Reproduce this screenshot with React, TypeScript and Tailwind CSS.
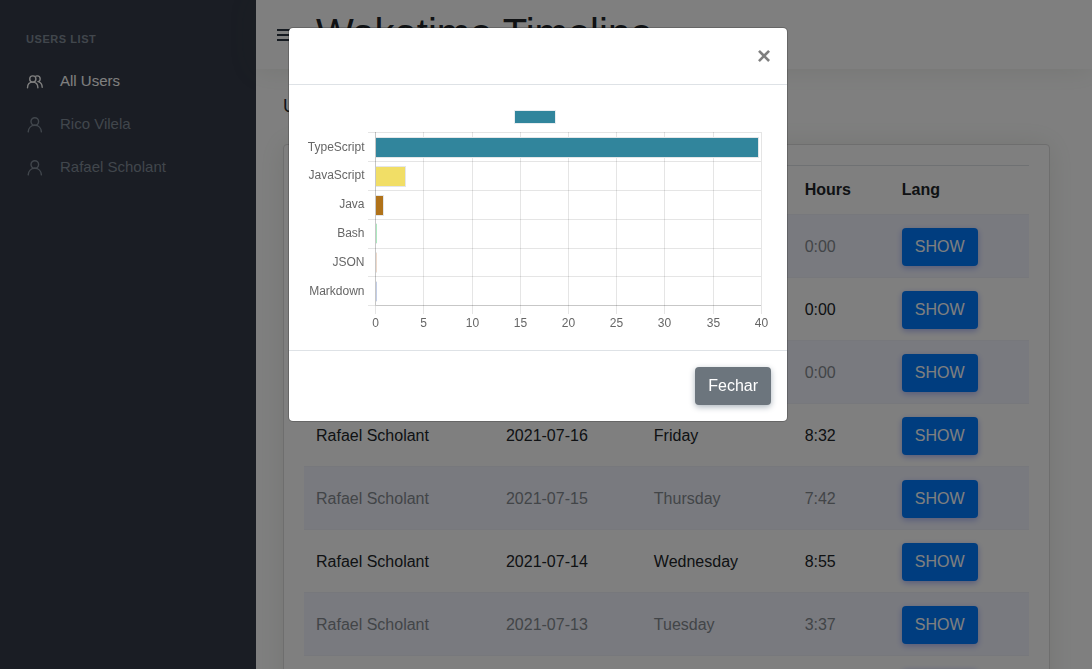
import React from "react";

const SIDEBAR_USERS = ["Rico Vilela", "Rafael Scholant"];

const ENTRIES = [
  { name: "Rafael Scholant", date: "2021-07-19", day: "Monday", hours: "0:00" },
  { name: "Rafael Scholant", date: "2021-07-18", day: "Sunday", hours: "0:00" },
  { name: "Rafael Scholant", date: "2021-07-17", day: "Saturday", hours: "0:00" },
  { name: "Rafael Scholant", date: "2021-07-16", day: "Friday", hours: "8:32" },
  { name: "Rafael Scholant", date: "2021-07-15", day: "Thursday", hours: "7:42" },
  { name: "Rafael Scholant", date: "2021-07-14", day: "Wednesday", hours: "8:55" },
  { name: "Rafael Scholant", date: "2021-07-13", day: "Tuesday", hours: "3:37" },
  { name: "Rafael Scholant", date: "2021-07-12", day: "Monday", hours: "8:10" },
];

const LANGUAGES = [
  { label: "TypeScript", width: 383, fill: "#31859c", opacity: 1, top: 36, baseline: 50 },
  { label: "JavaScript", width: 30, fill: "#f1de66", opacity: 1, top: 65, baseline: 78 },
  { label: "Java", width: 8, fill: "#b07219", opacity: 1, top: 94, baseline: 107 },
  { label: "Bash", width: 1, fill: "#89e0a5", opacity: 0.7, top: 122, baseline: 136 },
  { label: "JSON", width: 1, fill: "#e8c9b4", opacity: 0.7, top: 151, baseline: 165 },
  { label: "Markdown", width: 1, fill: "#a9b8dc", opacity: 0.7, top: 180, baseline: 194 },
];

const ROW_LINES = [31, 60, 89, 118, 147, 175, 204];
const COLUMN_LINES = [70, 118, 167, 215, 263, 311, 359, 408, 456];

function UserIcon() {
  return (
    <svg width="18" height="18" viewBox="0 0 18 18" fill="none" stroke="currentColor" strokeWidth="1.4" strokeLinecap="round" aria-hidden="true">
      <circle cx="8.800" cy="5.500" r="3.800" />
      <path d="M2.200 15.900c.2-3.900 2.900-6.600 6.600-6.600s6.400 2.700 6.600 6.600" />
    </svg>
  );
}

function UsersIcon() {
  return (
    <svg width="18" height="18" viewBox="0 0 18 18" fill="none" stroke="currentColor" strokeWidth="1.400" strokeLinecap="round" aria-hidden="true">
      <circle cx="6.800" cy="6" r="3.100" />
      <path d="M1.500 14.700c.1-3.300 2.200-5.600 5.200-5.600s5.100 2.300 5.200 5.600" />
      <path d="M9.900 3.200c.4-.2.800-.3 1.300-.3 1.700 0 3 1.400 3 3.100 0 1.200-.7 2.200-1.700 2.700 2.200.8 3.600 2.900 3.700 5.600" />
    </svg>
  );
}

function Sidebar() {
  return (
    <aside className="w-64 shrink-0 bg-[#343a48] px-[26px] pt-[31px]">
      <h2 className="text-[11px] leading-4 font-bold tracking-wider text-[#828d99]">USERS LIST</h2>
      <nav className="mt-[13px] text-[15px]">
        <a href="#all" className="flex h-[43px] items-center gap-4 text-white">
          <UsersIcon />
          All Users
        </a>
        {SIDEBAR_USERS.map((user) => (
          <a key={user} href="#user" className="flex h-[43px] items-center gap-4 text-[#828d99]">
            <UserIcon />
            {user}
          </a>
        ))}
      </nav>
    </aside>
  );
}

function EntriesTable() {
  return (
    <table className="w-full table-fixed border-collapse text-left">
      <colgroup>
        <col className="w-[26.2%]" />
        <col className="w-[20.4%]" />
        <col className="w-[20.8%]" />
        <col className="w-[13.4%]" />
        <col />
      </colgroup>
      <thead>
        <tr className="h-[49px] border-t border-[#dee2e6]">
          {["Name", "Date", "Day", "Hours", "Lang"].map((heading) => (
            <th key={heading} className="px-3 font-bold">{heading}</th>
          ))}
        </tr>
      </thead>
      <tbody>
        {ENTRIES.map((entry) => (
          <tr key={entry.date} className="h-[63px] border-y border-[#eff1f8] odd:bg-[#f3f5ff] odd:text-[#858a90]">
            <td className="px-3 pt-[2px]">{entry.name}</td>
            <td className="px-3 pt-[2px]">{entry.date}</td>
            <td className="px-3 pt-[2px]">{entry.day}</td>
            <td className="px-3 pt-[2px]">{entry.hours}</td>
            <td className="px-3 pt-[2px]">
              <button type="button" className="block h-[38px] rounded bg-[#007bff] px-[13px] text-white shadow-[0_2px_6px_#acb5f6]">
                SHOW
              </button>
            </td>
          </tr>
        ))}
      </tbody>
    </table>
  );
}

function LanguageChart() {
  return (
    <svg viewBox="0 0 466 233" className="block w-full" role="img" aria-label="Hours by language" fontFamily="Liberation Sans, Arial, sans-serif" fontSize="12" fill="#666">
      <rect x="209.500" y="9.500" width="41" height="13" fill="#31859c" stroke="#e8edf0" />
      <g fill="#000" fillOpacity="0.100">
        {ROW_LINES.slice(0, -1).map((y) => (
          <rect key={y} x="63" y={y} width="393" height="1" />
        ))}
        <rect x="63" y="204" width="7" height="1" />
        {COLUMN_LINES.slice(1).map((x) => (
          <rect key={x} x={x} y="31" width="1" height="182" />
        ))}
        <rect x="70" y="205" width="1" height="8" />
      </g>
      {LANGUAGES.map((language) => (
        <g key={language.label} opacity={language.opacity}>
          <rect x="71" y={language.top} width={language.width} height="21" fill="#e4e6e8" />
          <rect x="71" y={language.top + 1} width={Math.max(language.width - 1, 1)} height="19" fill={language.fill} />
        </g>
      ))}
      {LANGUAGES.map((language) => (
        <text key={language.label} x="59.500" y={language.baseline} textAnchor="end">{language.label}</text>
      ))}
      <g fill="#000" fillOpacity="0.220">
        <rect x="70" y="31" width="1" height="174" />
        <rect x="71" y="204" width="385" height="1" />
      </g>
      {COLUMN_LINES.map((x, index) => (
        <text key={x} x={x + 0.5} y="226" textAnchor="middle">{index * 5}</text>
      ))}
    </svg>
  );
}

function ChartModal() {
  return (
    <div className="fixed inset-0 z-20 bg-black/50 pr-4">
      <div role="dialog" aria-modal="true" aria-label="Languages" className="mx-auto mt-[27px] max-w-[500px] rounded-[5px] border border-black/20 bg-white bg-clip-padding">
        <header className="flex justify-end border-b border-[#dee2e6] p-4">
          <button type="button" aria-label="Close" className="text-2xl leading-6 font-bold text-black opacity-50">×</button>
        </header>
        <div className="p-4">
          <LanguageChart />
        </div>
        <footer className="flex justify-end border-t border-[#dee2e6] p-4">
          <button type="button" className="h-[38px] rounded bg-[#6c757d] px-[13px] text-white shadow-[0_2px_6px_#acb5bd]">Fechar</button>
        </footer>
      </div>
    </div>
  );
}

export default function App() {
  return (
    <div className="flex h-screen overflow-hidden bg-white font-['Liberation_Sans',Arial,sans-serif] text-base text-[#212529]">
      <Sidebar />
      <div className="min-w-0 flex-1">
        <header className="relative flex h-[69px] items-center gap-[22px] bg-white pl-[21px] shadow-[0_0_28px_rgba(86,100,60,0.13)]">
          <button type="button" aria-label="Toggle menu">
            <svg width="17" height="12" viewBox="0 0 17 12" fill="#2b3540" className="block" aria-hidden="true">
              <path d="M0 0h17v2H0zM0 5h17v2H0zM0 10h17v2H0z" />
            </svg>
          </button>
          <h1 className="pb-1 text-[40px] leading-[48px]">Wakatime Timeline</h1>
        </header>
        <main className="pt-[25px] pr-[42px] pl-[27px]">
          <h2 className="text-lg leading-6">Users</h2>
          <section className="mt-[26px] rounded border border-[#dcdcdc] bg-white p-5 shadow-[0_0_28px_rgba(86,100,60,0.13)]">
            <EntriesTable />
          </section>
        </main>
      </div>
      <ChartModal />
    </div>
  );
}
